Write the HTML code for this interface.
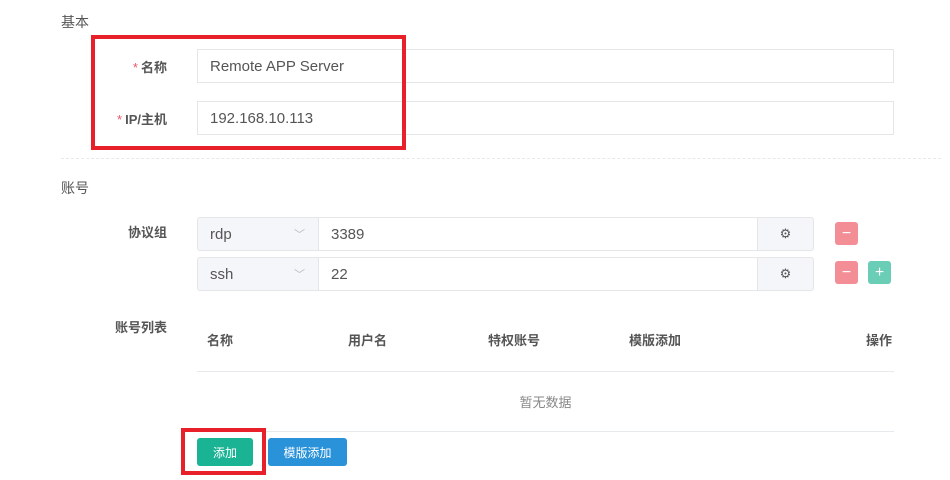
<!DOCTYPE html>
<html><head><meta charset="utf-8"><style>
body{margin:0;width:950px;height:480px;background:#fff;font-family:"Liberation Sans","Noto Sans CJK SC",sans-serif;color:#676a6c;position:relative;overflow:hidden}
.a{position:absolute}
.t{font-size:14px;color:#555}
.lbl{font-size:13px;font-weight:bold;color:#555;text-align:right;width:120px}
.star{color:#ed5565;font-weight:normal;margin-right:3px}
.inp{border:1px solid #e5e6e7;box-sizing:border-box;font-size:15px;color:#555;padding-left:12px;display:flex;align-items:center}
.box{border:4px solid #e8202a;box-sizing:border-box}
.grp{background:#f5f6fa}
.th{font-size:13px;font-weight:bold;color:#555}
.btn{color:#fff;font-size:12px;border-radius:3px;display:flex;align-items:center;justify-content:center}
</style></head><body>
<div class="a t" style="left:61px;top:12px">基本</div>
<div class="a lbl" style="left:47px;top:57px"><span class="star">*</span>名称</div>
<div class="a inp" style="left:197px;top:49px;width:697px;height:34px">Remote APP Server</div>
<div class="a lbl" style="left:47px;top:109px"><span class="star">*</span>IP/主机</div>
<div class="a inp" style="left:197px;top:101px;width:697px;height:34px">192.168.10.113</div>
<div class="a box" style="left:91px;top:35px;width:315px;height:115px"></div>
<div class="a" style="left:61px;top:158px;width:880px;border-top:1px dashed #e7eaec"></div>
<div class="a t" style="left:61px;top:178px">账号</div>
<div class="a lbl" style="left:47px;top:222px">协议组</div>

<div class="a inp grp" style="left:197px;top:217px;width:122px;height:34px;border-radius:3px 0 0 3px">rdp<span style="position:absolute;left:96px;color:#bbb;font-size:11px">﹀</span></div>
<div class="a inp" style="left:318px;top:217px;width:440px;height:34px;padding-left:12px">3389</div>
<div class="a inp grp" style="left:757px;top:217px;width:57px;height:34px;justify-content:center;padding:0;border-radius:0 3px 3px 0;font-size:13px">⚙</div>
<div class="a btn" style="left:835px;top:222px;width:23px;height:23px;background:#f48e96;font-size:16px">−</div>

<div class="a inp grp" style="left:197px;top:257px;width:122px;height:34px;border-radius:3px 0 0 3px">ssh<span style="position:absolute;left:96px;color:#bbb;font-size:11px">﹀</span></div>
<div class="a inp" style="left:318px;top:257px;width:440px;height:34px;padding-left:12px">22</div>
<div class="a inp grp" style="left:757px;top:257px;width:57px;height:34px;justify-content:center;padding:0;border-radius:0 3px 3px 0;font-size:13px">⚙</div>
<div class="a btn" style="left:835px;top:261px;width:23px;height:23px;background:#f48e96;font-size:16px">−</div>
<div class="a btn" style="left:868px;top:261px;width:23px;height:23px;background:#6acdb6;font-size:16px">+</div>

<div class="a lbl" style="left:47px;top:317px">账号列表</div>
<div class="a th" style="left:207px;top:330px">名称</div>
<div class="a th" style="left:348px;top:330px">用户名</div>
<div class="a th" style="left:488px;top:330px">特权账号</div>
<div class="a th" style="left:629px;top:330px">模版添加</div>
<div class="a th" style="left:866px;top:330px">操作</div>
<div class="a" style="left:197px;top:371px;width:697px;border-top:1px solid #e7eaec"></div>
<div class="a" style="left:197px;top:392px;width:697px;text-align:center;font-size:13px;color:#888">暂无数据</div>
<div class="a" style="left:197px;top:431px;width:697px;border-top:1px solid #e7eaec"></div>
<div class="a btn" style="left:197px;top:438px;width:56px;height:28px;background:#1ab394">添加</div>
<div class="a btn" style="left:268px;top:438px;width:79px;height:28px;background:#2a92d8">模版添加</div>
<div class="a box" style="left:181px;top:428px;width:85px;height:47px"></div>
</body></html>
